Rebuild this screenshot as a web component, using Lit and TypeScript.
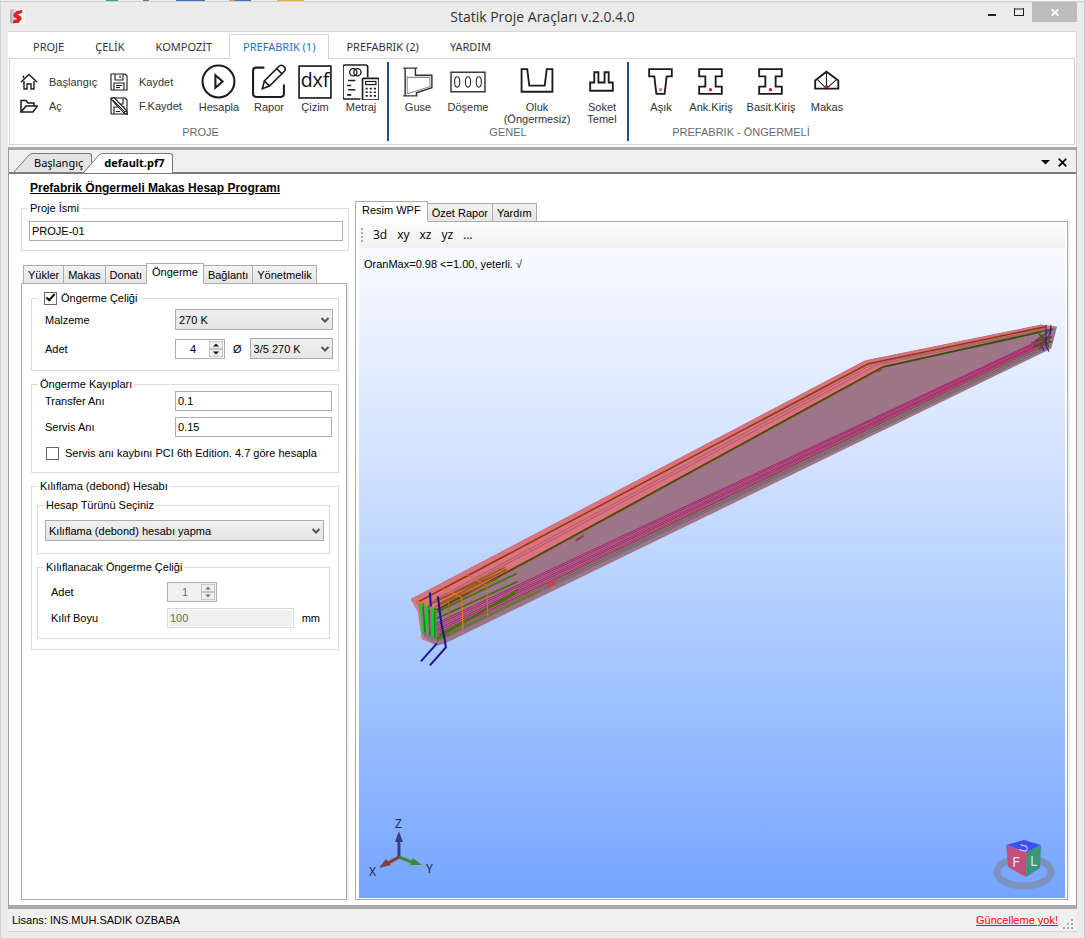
import { LitElement, html, css, svg } from "lit";
import { customElement, property, state } from "lit/decorators.js";
import { classMap } from "lit/directives/class-map.js";

const icons = {
  home: svg`<path d="M1 9 9 1.500 17 9M4 8V16H7V11H11V16H14V8M3.500 5V2.500" stroke-width="1.400"/>`,
  open: svg`<path d="M1 15V3.500H6L8 6H14V9M1 15H13L17.500 9H6L1 15Z" stroke-width="1.500"/>`,
  save: svg`<path d="M1 1H15L17 3V17H1Z M5 1V7H13V1M10 2.500V5M4 17V10H14V17M6 12.500H12M6 14.500H10" stroke-width="1.100"/>`,
  saveAs: svg`<path d="M1 1H15L17 3V17H1Z M5 1V7H13V1M4 17V10H14V17M6 14.500H10" stroke-width="1.100"/><path d="M1 2 4 .5 16.500 13.500 17.500 17.500 14 16Z" fill="#fff" stroke-width="1.100"/><path d="M3 3 15 15M14 16 16.500 13.500" stroke-width="1"/>`,
};

const bigIcons = {
  play: svg`<circle cx="17" cy="17" r="15.500" stroke-width="2"/><path d="M14 11V23L21 17Z" stroke-width="2"/>`,
  report: svg`<path d="M13 3.500H5Q2 3.500 2 6.500V29Q2 32 5 32H29Q32 32 32 29V20" stroke-width="2"/><path d="M11 24 13 16.500 27 2.500Q29 0 32 2.500Q34.500 5 32 7.500L18 21.500ZM13 16.500 18 21.500M25 4.500 30 9.500" stroke-width="1.600"/>`,
  dxf: svg`<rect x="2" y="2" width="31" height="31" stroke-width="1.600"/><text x="17.500" y="22" text-anchor="middle" font-size="19" fill="#111" stroke="none" font-family="Open Sans, Noto Sans, sans-serif">dxf</text>`,
  metraj: svg`<path d="M17 34H2Q0 34 0 32V3Q0 1 2 1H22Q24 1 24 3V13" stroke-width="1.600"/><circle cx="10" cy="8" r="3.500" stroke-width="1.300"/><circle cx="14" cy="8" r="3.500" stroke-width="1.300"/><path d="M5 16H12M4 21H8M5 25H12M4 30H8" stroke-width="1.500"/><rect x="19" y="14" width="16" height="21" rx="1" fill="#fff" stroke-width="1.600"/><rect x="22" y="17" width="10" height="3" stroke-width="1.200"/><path d="M22 24H33M22 27.500H33M22 31H33" stroke-width="1.600" stroke-dasharray="2 2"/>`,
  guse: svg`<path d="M3 4H17M3 31H17M5 4V31M15 4V11H31V23L16 28V31" stroke-width="1.400" stroke="#333"/><path d="M7 12V29M7 13H29V22L7 29" stroke-width="1" stroke="#888"/>`,
  slab: svg`<rect x="1" y="8" width="33" height="19" stroke-width="1.400" stroke="#333"/><ellipse cx="7" cy="17.500" rx="2.500" ry="5"/><ellipse cx="17.500" cy="17.500" rx="2.500" ry="5"/><ellipse cx="28" cy="17.500" rx="2.500" ry="5"/>`,
  gutter: svg`<path d="M2.500 5H8L10 21H25L27 5H32.500V27H2.500Z" stroke-width="1.800"/>`,
  socket: svg`<path d="M6 26V18H10V8H14V18H20V8H24V18H28V26Z" stroke-width="1.800"/>`,
  purlin: svg`<path d="M6 5H28V12H23L21 29H13L11 12H6Z" stroke-width="1.800"/><circle cx="17" cy="25" r="1.600" fill="#e66" stroke="none"/>`,
  girder: svg`<path d="M6 5H28V12H22V22H28V29H6V22H12V12H6Z" stroke-width="1.800"/><circle cx="17" cy="25" r="1.600" fill="red" stroke="none"/>`,
  truss: svg`<path d="M6 24V16L17 7.500 28.500 16V24Z" stroke-width="1.800"/><path d="M17 8V24L8 15M17 24 27 15" stroke-width="1"/><circle cx="17" cy="22" r="1.600" fill="red" stroke="none"/>`,
};

type BigIcon = keyof typeof bigIcons;
interface Command { icon: BigIcon; label: string; size: string }
interface Group { title: string; commands: Command[] }

const groups: Group[] = [
  {
    title: "PROJE",
    commands: [
      { icon: "play", label: "Hesapla", size: "md" },
      { icon: "report", label: "Rapor", size: "md" },
      { icon: "dxf", label: "Çizim", size: "sm" },
      { icon: "metraj", label: "Metraj", size: "md" },
    ],
  },
  {
    title: "GENEL",
    commands: [
      { icon: "guse", label: "Guse", size: "md" },
      { icon: "slab", label: "Döşeme", size: "md" },
      { icon: "gutter", label: "Oluk (Öngermesiz)", size: "xl" },
      { icon: "socket", label: "Soket Temel", size: "sm" },
    ],
  },
  {
    title: "PREFABRIK - ÖNGERMELİ",
    commands: [
      { icon: "purlin", label: "Aşık", size: "md" },
      { icon: "girder", label: "Ank.Kiriş", size: "md" },
      { icon: "girder", label: "Basit.Kiriş", size: "lg" },
      { icon: "truss", label: "Makas", size: "sm" },
    ],
  },
];

@customElement("app-ribbon")
export class AppRibbon extends LitElement {
  @state() private active = 3;
  private tabs = ["PROJE", "ÇELİK", "KOMPOZİT", "PREFABRIK (1)", "PREFABRIK (2)", "YARDIM"];

  static styles = css`
    :host { display: block; background: #fff; padding: 2px 1px 2px 1px; }
    button { font: inherit; color: inherit; background: none; border: 0; padding: 0; cursor: default; }
    .tabs { display: flex; gap: 3px; padding-left: 10px; }
    .tab { height: 25px; padding: 0 13px 1px; border: 1px solid transparent; border-bottom: 0;
      font: 11px/22px "Noto Sans", "Open Sans", sans-serif; color: #333; }
    .tab.on { color: #1a73c8; border-color: #d4d4d4; background: #fff; position: relative; }
    .panel { display: flex; margin-top: -1px; border: 1px solid #d4d4d4; padding: 3px 0 3px 4px; height: 79px;
      font: 11px/12px "Liberation Sans", Arial, sans-serif; color: #333; }
    .group { display: flex; flex-direction: column; justify-content: space-between; border-right: 2px solid #1f4e95; }
    .group:last-child { border: 0; }
    .group h2 { margin: 0; padding-bottom: 3px; font: 11px/12px "Liberation Sans", Arial, sans-serif; color: #6a6a6a; text-align: center; }
    .row { display: flex; padding: 2px 4px 0 4px; }
    .group:first-child .row { padding: 2px 1px 0 0; }
    .group:last-child .row { padding: 2px 5px 0 7px; }
    .small { display: grid; grid-template-columns: 90px 84px; grid-auto-rows: 24px; padding: 6px 0 0 6px; }
    .small button { display: flex; align-items: center; gap: 11px; text-align: left; }
    .big { display: flex; flex-direction: column; align-items: center; gap: 1px; }
    .sm { width: 42px; } .md { width: 50px; } .lg { width: 70px; } .xl { width: 88px; }
    svg { fill: none; stroke: #1c1c1c; flex: none; }
  `;

  render() {
    return html`
      <nav class="tabs" role="tablist">
        ${this.tabs.map((t, i) => html`<button role="tab" aria-selected=${i === this.active}
          class=${classMap({ tab: true, on: i === this.active })} @click=${() => (this.active = i)}>${t}</button>`)}
      </nav>
      <div class="panel">
        ${groups.map((g, gi) => html`<section class="group">
          <div class="row">
            ${gi === 0 ? html`<div class="small">
              ${this.small("home", "Başlangıç")}${this.small("save", "Kaydet")}
              ${this.small("open", "Aç")}${this.small("saveAs", "F.Kaydet")}
            </div>` : null}
            ${g.commands.map((c) => html`<button class="big ${c.size}">
              <svg width="36" height="36" viewBox="0 0 35 35">${bigIcons[c.icon]}</svg><span>${c.label}</span>
            </button>`)}
          </div>
          <h2>${g.title}</h2>
        </section>`)}
      </div>`;
  }

  private small(icon: keyof typeof icons, label: string) {
    return html`<button><svg width="18" height="18" viewBox="0 0 18 18">${icons[icon]}</svg>${label}</button>`;
  }
}

type Pt = [number, number];
const lerp = (a: Pt, b: Pt, t: number): Pt => [a[0] + (b[0] - a[0]) * t, a[1] + (b[1] - a[1]) * t];
const line = (pts: Pt[], color: string, width = 1, opacity = 1) =>
  svg`<polyline points=${pts.map((p) => p.join(",")).join(" ")} stroke=${color} stroke-width=${width} opacity=${opacity} fill="none"/>`;

@customElement("beam-view")
export class BeamView extends LitElement {
  static styles = css`
    :host { display: grid; flex: 1; min-height: 0; background: linear-gradient(#f8fbff, #d6e4ff 30%, #a8c8ff 62%, #76a4ff);
      font: 11px/14px "Liberation Sans", Arial, sans-serif; color: #000; }
    p { grid-area: 1 / 1; margin: 9px 5px; z-index: 1; }
    svg { grid-area: 1 / 1; width: 100%; height: 100%; min-height: 0; display: block; }
    text { font-family: "Noto Sans", sans-serif; }
  `;

  private tendons() {
    const n = 7;
    return Array.from({ length: n }, (_, i) => {
      const t = i / (n - 1);
      const a = lerp([436, 623], [437, 635], t);
      const b = lerp([1046, 337], [1048, 343], t);
      return line([a, b], i % 3 === 2 ? "#a83c58" : "#b30a70", 1, 0.85);
    });
  }

  private mesh() {
    return Array.from({ length: 6 }, (_, i) => line([[420 + i * 3, 602 + i], [423 + i * 2.4, 634 + i]], i % 2 ? "#0a8a12" : "#12d322", 1.6));
  }

  private bars() {
    const starts: Pt[] = [[430, 604], [436, 600], [440, 603], [436, 606], [436, 612], [437, 618], [437, 638], [440, 634]];
    const ends: Pt[] = [[505, 567], [500, 573], [507, 569], [498, 578], [517, 573], [518, 581], [519, 589], [516, 593]];
    return starts.map((s, i) => line([s, ends[i]], i < 4 ? "#9a5a12" : "#4a7008", 1.8));
  }

  render() {
    return html`
      <p>OranMax=0.98 &lt;=1.00, yeterli. √</p>
      <svg viewBox="359 248 707 649" role="img" aria-label="Kiriş modeli">
        <polygon points="411,599 866,360 1043,324 1058,326 1055,338 1052,348 445,643 437,645 422,638 418,611" fill="#9b7083" opacity=".96"/>
        <polygon points="411,599 866,360 1043,324 1058,326 1042,330 884,366 436,610 418,603" fill="#df7080"/>
        <polygon points="411,599 418,603 424,637 437,645 422,639 418,612" fill="#c87f92"/>
        ${line([[411, 599], [866, 360], [1043, 324]], "#c9717f", 1)}
        ${line([[417, 602], [540, 537], [869, 363], [1046, 326]], "#84420a", 1.6)}
        ${line([[428, 603], [540, 543], [874, 363], [1046, 328]], "#985f69", 0.9)}
        ${line([[430, 604], [540, 546], [878, 364], [1046, 329]], "#985f69", 0.9)}
        ${line([[436, 610], [540, 554], [884, 366], [1042, 331]], "#35500a", 1.9)}
        ${line([[436, 611], [540, 555], [884, 367]], "#9a5417", 0.7)}
        ${this.tendons()}
        ${line([[437, 637], [1050, 342]], "#8a5a3c", 1)}
        ${line([[437, 639], [1050, 344]], "#4e6670", 1)}
        ${line([[437, 641], [1050, 346]], "#76606c", 1)}
        ${line([[576, 540], [584, 535]], "#8b3d50", 2)}
        ${line([[878, 371], [883, 369]], "#8b3d50", 1)}
        ${line([[547, 585], [555, 582]], "#c8434f", 4)}
        ${this.bars()}
        ${line([[437, 640], [540, 590]], "#6c7a1c", 1.6)}
        ${line([[417, 601], [437, 611]], "#e87812", 2)}
        ${line([[443, 588], [462, 597], [463, 629]], "#e87812", 1.2)}
        ${line([[466, 574], [487, 585], [488, 616]], "#d8741c", 1)}
        ${line([[448, 594], [450, 620]], "#b4642c", 1)}
        ${line([[473, 590], [474, 610]], "#b4642c", 1)}
        ${this.mesh()}
        ${line([[423, 632], [437, 640]], "#d43dc8", 2)}
        ${line([[420, 604], [436, 611], [436, 640], [425, 635]], "#14c422", 1)}
        ${line([[430, 592], [431, 606]], "#1616a6", 2)}
        ${line([[438, 596], [440, 612], [442, 626], [445, 640], [446, 647], [430, 665]], "#1c1096", 2)}
        ${line([[437, 643], [421, 661]], "#1616a6", 2)}
        ${line([[1030, 334], [1054, 328], [1036, 340], [1053, 336], [1034, 346], [1052, 341], [1040, 333], [1050, 346]], "#47561a", 1.6, 0.9)}
        ${line([[1032, 342], [1050, 336], [1040, 349], [1052, 331]], "#84304c", 1.3, 0.9)}
        ${line([[1047, 324], [1047, 345], [1050, 351]], "#1c1096", 1)}
        ${line([[1052, 324], [1051, 334]], "#1c1096", 1)}
        ${line([[1043, 346], [1045, 350]], "#1c1096", 1)}

        <g>
          <path d="M399 857V840" stroke="#3c3c82" stroke-width="3"/><path d="M399 831 395 842H403Z" fill="#3c3c82"/>
          <path d="M399 857 412 862" stroke="#3e853e" stroke-width="3"/><path d="M422 865 410 865 413 858Z" fill="#3e853e"/>
          <path d="M399 857 388 863" stroke="#853e3e" stroke-width="3"/><path d="M379 868 386 859 391 865Z" fill="#853e3e"/>
          <text x="395" y="828" font-size="12" fill="#1b2b4b">Z</text>
          <text x="369" y="876" font-size="12" fill="#1b2b4b">X</text>
          <text x="426" y="873" font-size="12" fill="#1b2b4b">Y</text>
        </g>
        <g>
          <ellipse cx="1025" cy="872" rx="27" ry="14" fill="none" stroke="#7c93bf" stroke-width="7"/>
          <polygon points="1007,845 1025,840 1042,845 1028,852" fill="#3c50f4"/>
          <polygon points="1007,845 1028,852 1027,877 1009,867" fill="#c14f7c"/>
          <polygon points="1028,852 1042,845 1041,868 1027,877" fill="#3b9579"/>
          <text x="1013" y="867" font-size="15" fill="#f0dbe9">F</text>
          <text x="1031" y="866" font-size="14" fill="#c8e8e4">L</text>
          <text transform="translate(1020 849) rotate(-75)" x="-2" y="8" font-size="11" fill="#cdd5ff">U</text>
        </g>
      </svg>`;
  }
}

const chevron = html`<svg class="chev" width="10" height="8" viewBox="0 0 10 8"><path d="M1.500 2 5 5.500 8.500 2" fill="none" stroke="#555" stroke-width="2"/></svg>`;

@customElement("spin-box")
export class SpinBox extends LitElement {
  @property({ type: Number }) value = 0;
  @property({ type: Boolean }) disabled = false;
  @property() label = "";

  static styles = css`
    :host { display: block; width: 50px; }
    .box { display: flex; box-sizing: border-box; height: 20px; border: 1px solid #abadb3; background: #fff; padding: 1px; }
    .box.off { background: #f0f0f0; }
    input { flex: 1; min-width: 0; border: 0; padding: 0; background: none; text-align: center; outline: 0;
      font: 11px/16px "Liberation Sans", Arial, sans-serif; color: #000; appearance: textfield; -moz-appearance: textfield; }
    input::-webkit-inner-spin-button { display: none; }
    input:disabled { color: #6d6d6d; }
    .arrows { display: grid; grid-template-rows: 1fr 1fr; width: 14px; }
    button { display: grid; place-items: center; padding: 0; border: 1px solid #c4c4c4; background: #f0f0f0; min-height: 0; }
    svg { display: block; }
  `;

  render() {
    return html`<div class=${classMap({ box: true, off: this.disabled })}>
      <input type="number" aria-label=${this.label} .value=${String(this.value)} ?disabled=${this.disabled} />
      <div class="arrows">
        <button aria-label="Artır" ?disabled=${this.disabled} @click=${() => this.value++}>
          <svg width="6" height="4" viewBox="0 0 6 4"><path d="M0 3.500 3 .5 6 3.500Z" fill=${this.disabled ? "#777" : "#000"}/></svg></button>
        <button aria-label="Azalt" ?disabled=${this.disabled} @click=${() => this.value--}>
          <svg width="6" height="4" viewBox="0 0 6 4"><path d="M0 .5 3 3.500 6 .5Z" fill=${this.disabled ? "#777" : "#000"}/></svg></button>
      </div>
    </div>`;
  }
}

@customElement("app-root")
export class AppRoot extends LitElement {
  @state() private sideTab = 3;
  @state() private viewTab = 0;
  private sideTabs = ["Yükler", "Makas", "Donatı", "Öngerme", "Bağlantı", "Yönetmelik"];
  private viewTabs = ["Resim WPF", "Özet Rapor", "Yardım"];

  static styles = css`
    :host { display: flex; flex-direction: column; box-sizing: border-box; min-height: 100vh; background: #ebebeb;
      border-left: 1px solid #d4d4d4; border-right: 1px solid #c8c8c8; padding: 0 7px 6px;
      font: 11px/14px "Liberation Sans", Arial, sans-serif; color: #000; }
    button { font: inherit; color: inherit; cursor: default; }
    .edge { height: 1px; margin: 0 -7px; border-bottom: 1px solid #cfcfcf;
      background: linear-gradient(90deg, #eee 105px, #3f9f86 105px 117px, #eee 117px 142px, #777 142px 148px, #eee 148px 175px, #3c74b4 175px 204px, #eee 204px 228px, #caa35a 228px 234px, #3c74b4 234px 250px, #eee 250px 276px, #e3a94c 276px 303px, #f4f4f4 303px); }
    .title { display: grid; grid-template-columns: 1fr auto 1fr; height: 29px; }
    .title h1 { margin: 0; font: 14px/29px "Open Sans", "Noto Sans", sans-serif; color: #333; }
    .logo { margin: 6px 1px; }
    .win { display: flex; justify-content: flex-end; }
    .win button { width: 27px; height: 20px; border: 0; padding: 0; background: none; display: grid; place-items: center; }
    .win .close { width: 45px; background: #bcbcbc; }
    app-ribbon { border-top: 1px solid #dadada; border-right: 1px solid #dadada; }
    .doc { flex: 1; display: flex; flex-direction: column; border: 1px solid #9c9c9c; border-top: 3px solid #a9a9a9; border-bottom: 4px solid #a9a9a9; background: #fff; }
    .strip { display: flex; align-items: flex-end; height: 22px; padding-left: 5px; background: #f0f0f0; border-bottom: 2px solid #7c7c7c; font: 11px/18px "Noto Sans", "Open Sans", sans-serif; }
    .doctab { display: flex; border: 0; padding: 0; background: none; height: 19px; }
    .doctab svg { display: block; }
    .doctab span { border: 1px solid #777; border-left: 0; border-bottom: 0; border-top-right-radius: 3px; padding: 0 8px 0 1px; line-height: 17px; background: #e4e4e4; }
    .doctab.on { margin: 0 auto -1px -8px; font-weight: bold; height: 20px; }
    .doctab.on span { background: #fff; line-height: 18px; }
    .tool { border: 0; padding: 0; background: none; height: 20px; width: 17px; display: grid; place-items: center; }
    .strip .tool:last-child { margin-right: 5px; }
    .body { flex: 1; display: grid; grid-template-columns: 328px 1fr; column-gap: 6px; padding: 7px 8px 5px 12px; }
    .col { display: flex; flex-direction: column; min-width: 0; }
    h2 { margin: 0 0 6px 9px; font-size: 12px; line-height: 14px; text-decoration: underline; }
    .view { padding-top: 21px; }
    .tabs { display: flex; align-items: flex-end; height: 20px; margin-bottom: -1px; position: relative; }
    .side .tabs { margin-top: 13px; padding-left: 2px; }
    .tab { height: 19px; padding: 1px 4px 0; border: 1px solid #acacac; border-left-width: 0; background: linear-gradient(#f2f2f2, #e6e6e6); line-height: 17px; white-space: nowrap; }
    .tab:first-child { border-left-width: 1px; }
    .tab.on { height: 21px; padding: 0 5px 2px; background: #fff; border-bottom-color: #fff; margin-left: -1px; border-left-width: 1px; }
    .view .tab.on { margin-left: 0; padding: 0 6px 2px; }
    .page { flex: 1; display: flex; flex-direction: column; border: 1px solid #acacac; box-shadow: 2px 0 #f0f0f0; background: #fff; }
    .side .page { margin-right: 2px; padding: 7px 7px 0 9px; }
    .view .page { padding: 0 2px 1px 3px; }
    fieldset { margin: 0; padding: 0; border: 1px solid #dcdcdc; min-width: 0; }
    fieldset + fieldset { margin-top: 6px; }
    legend { margin-left: 6px; padding: 0 2px; }
    legend label { display: flex; align-items: center; gap: 4px; padding-left: 4px; }
    input[type="text"] { box-sizing: border-box; width: 100%; height: 20px; border: 1px solid #abadb3; padding: 0 2px; font: inherit; background: #fff; color: #000; }
    input[type="text"]:disabled { color: #6d6d6d; background: #f0f0f0; border-color: #d9d9d9; box-shadow: inset 0 0 0 1px #fff; }
    input[type="checkbox"] { appearance: none; width: 13px; height: 13px; margin: 0; border: 1px solid #666; background: #fff; display: grid; place-items: center; }
    input[type="checkbox"]:checked::before { content: ""; width: 7px; height: 3px; border: solid #000; border-width: 0 0 2px 2px; transform: rotate(-48deg); margin-top: -3px; }
    .name { padding: 6px 5px 9px 7px; }
    .grid { display: grid; grid-template-columns: 130px 1fr; row-gap: 6px; align-items: center; padding: 0 6px 0 13px; }
    .steel { padding: 4px 5px 11px 13px; row-gap: 8px; }
    .loss { padding-bottom: 9px; }
    .check { grid-column: 1 / 3; display: flex; align-items: center; gap: 6px; height: 20px; padding-left: 1px; }
    .qty { display: flex; align-items: center; gap: 8px; }
    .qty .select { flex: 1; }
    .select { display: grid; align-items: center; }
    .select > * { grid-area: 1 / 1; }
    select { appearance: none; width: 100%; height: 21px; border: 1px solid #acacac; border-radius: 0; padding: 0 3px; font: inherit; color: #000; background: linear-gradient(#f0f0f0, #e5e5e5); }
    .chev { justify-self: end; margin-right: 3px; pointer-events: none; }
    .nest { padding: 5px 8px 10px 5px; }
    .method { padding: 8px 5px 12px 7px; }
    .sheath { grid-template-columns: 116px 1fr; padding: 8px 9px 10px 13px; }
    .len { display: flex; align-items: center; gap: 8px; }
    .len input { flex: 1; min-width: 0; }
    .bar { display: flex; align-items: center; height: 26px; padding-left: 2px; background: linear-gradient(#fdfdfd, #f1f1f1); border-radius: 0 0 0 3px; font: 12px/16px "Open Sans", "Noto Sans", sans-serif; }
    .bar button { border: 0; padding: 0 5px; background: none; }
    .bar svg { margin-right: 4px; }
    .status { display: flex; justify-content: space-between; align-items: center; height: 22px; background: #f0f0f0; border-bottom: 1px solid #d7d7d7; padding: 0 2px 0 4px; }
    .status a { color: #f00; margin-left: auto; margin-right: 5px; }
    .grip { align-self: flex-end; }
  `;

  private select(id: string, label: string, option: string) {
    return html`<div class="select"><select id=${id} aria-label=${label}><option>${option}</option></select>${chevron}</div>`;
  }

  private tabList(tabs: string[], active: number, pick: (i: number) => void) {
    return html`<div class="tabs" role="tablist">${tabs.map((t, i) => html`<button role="tab" aria-selected=${i === active}
      class=${classMap({ tab: true, on: i === active })} @click=${() => pick(i)}>${t}</button>`)}</div>`;
  }

  render() {
    return html`
      <div class="edge"></div>
      <header class="title">
        <svg class="logo" width="17" height="17" viewBox="0 0 17 17"><defs><linearGradient id="g" x2="1"><stop stop-color="#aaa"/><stop offset=".5" stop-color="#f6f6f6"/></linearGradient></defs>
          <rect x="1" y="1" width="15" height="15" rx="3" fill="url(#g)"/><path d="M13.500 2 13 5 8.500 6.500 12 8.500Q13.500 10 12 12L9.500 15 4 15 4.500 12 8.500 11 5 9Q3.500 7.500 5 5.500L7.500 3Z" fill="#dc1f26"/></svg>
        <h1>Statik Proje Araçları v.2.0.4.0</h1>
        <div class="win">
          <button aria-label="Simge durumuna küçült"><svg width="8" height="12"><path d="M0 8H8V10H0Z" fill="#222"/></svg></button>
          <button aria-label="Ekranı kapla"><svg width="10" height="8"><path d="M.5 1H9.500M.5 0V8M9.500 0V8M0 7.500H10" fill="none" stroke="#222"/></svg></button>
          <button class="close" aria-label="Kapat"><svg width="8" height="7" viewBox="0 0 8 7"><path d="M.7 .3 7.300 6.700M7.300 .3 .7 6.700" stroke="#fff" stroke-width="1.700"/></svg></button>
        </div>
      </header>
      <app-ribbon></app-ribbon>
      <main class="doc">
        <nav class="strip">
          <button class="doctab"><svg width="19" height="19"><path d="M0 19 15 2Q17 .5 19 .5V19Z" fill="#e4e4e4"/><path d="M0 19 15 2Q17 .5 19 .5" fill="none" stroke="#777"/></svg><span>Başlangıç</span></button>
          <button class="doctab on"><svg width="19" height="20"><path d="M0 20 15 2Q17 .5 19 .5V20Z" fill="#fff"/><path d="M0 19 15 2Q17 .5 19 .5" fill="none" stroke="#777"/></svg><span>default.pf7</span></button>
          <button class="tool" aria-label="Sekmeler"><svg width="9" height="5"><path d="M0 0H9L4.500 4.500Z"/></svg></button>
          <button class="tool" aria-label="Sekmeyi kapat"><svg width="9" height="9"><path d="M.7 .7 8.300 8.300M8.300 .7 .7 8.300" stroke="#000" stroke-width="1.700"/></svg></button>
        </nav>
        <div class="body">
          <div class="col side">
            <h2>Prefabrik Öngermeli Makas Hesap Programı</h2>
            <fieldset>
              <legend>Proje İsmi</legend>
              <div class="name"><input type="text" aria-label="Proje İsmi" .value=${"PROJE-01"} /></div>
            </fieldset>
            ${this.tabList(this.sideTabs, this.sideTab, (i) => (this.sideTab = i))}
            <div class="page">
              <fieldset>
                <legend><label><input type="checkbox" checked />Öngerme Çeliği</label></legend>
                <div class="grid steel">
                  <label for="mat">Malzeme</label>${this.select("mat", "Malzeme", "270 K")}
                  <span>Adet</span>
                  <div class="qty"><spin-box label="Adet" value="4"></spin-box><span>Ø</span>${this.select("dia", "Çap", "3/5 270 K")}</div>
                </div>
              </fieldset>
              <fieldset>
                <legend>Öngerme Kayıpları</legend>
                <div class="grid loss">
                  <label for="tr">Transfer Anı</label><input id="tr" type="text" .value=${"0.1"} />
                  <label for="sv">Servis Anı</label><input id="sv" type="text" .value=${"0.15"} />
                  <label class="check"><input type="checkbox" />Servis anı kaybını PCI 6th Edition. 4.7 göre hesapla</label>
                </div>
              </fieldset>
              <fieldset>
                <legend>Kılıflama (debond) Hesabı</legend>
                <div class="nest">
                  <fieldset>
                    <legend>Hesap Türünü Seçiniz</legend>
                    <div class="method">${this.select("kind", "Hesap Türünü Seçiniz", "Kılıflama (debond) hesabı yapma")}</div>
                  </fieldset>
                  <fieldset>
                    <legend>Kılıflanacak Öngerme Çeliği</legend>
                    <div class="grid sheath">
                      <span>Adet</span><spin-box label="Adet" value="1" disabled></spin-box>
                      <label for="len">Kılıf Boyu</label>
                      <div class="len"><input id="len" type="text" disabled .value=${"100"} /><span>mm</span></div>
                    </div>
                  </fieldset>
                </div>
              </fieldset>
            </div>
          </div>
          <div class="col view">
            ${this.tabList(this.viewTabs, this.viewTab, (i) => (this.viewTab = i))}
            <div class="page">
              <div class="bar">
                <svg width="3" height="14"><path d="M1 0V14" stroke="#aaa" stroke-width="2" stroke-dasharray="2 2"/></svg>
                ${["3d", "xy", "xz", "yz", "..."].map((b) => html`<button>${b}</button>`)}
              </div>
              <beam-view></beam-view>
            </div>
          </div>
        </div>
      </main>
      <footer class="status">
        <span>Lisans: INS.MUH.SADIK OZBABA</span>
        <a href="#">Güncelleme yok!</a>
        <svg class="grip" width="12" height="14"><path d="M8 2h2v2h-2zM8 6h2v2h-2zM8 10h2v2h-2zM4 6h2v2h-2zM4 10h2v2h-2zM0 10h2v2h-2z" fill="#aaa"/></svg>
      </footer>`;
  }
}
